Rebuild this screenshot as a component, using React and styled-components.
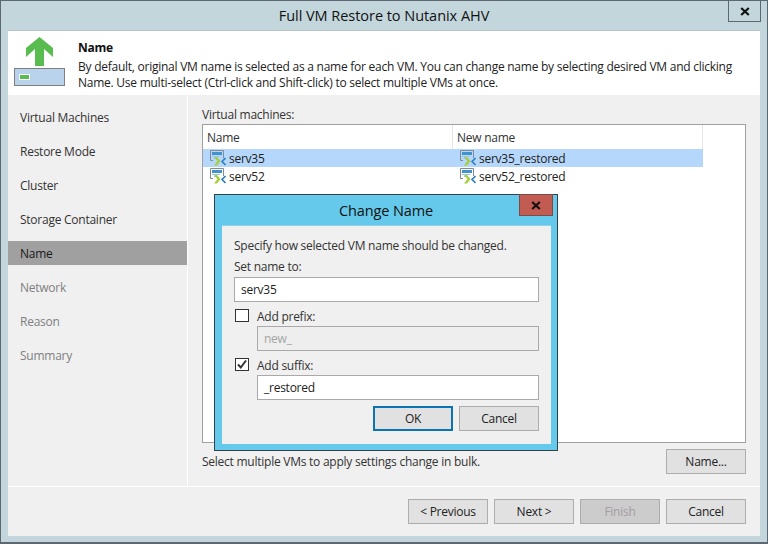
import React from 'react';
import styled, { createGlobalStyle } from 'styled-components';

const Global = createGlobalStyle`
  html, body { margin: 0; padding: 0; background: #c3d6dc; }
  body { font-family: "Open Sans", "Noto Sans", "Liberation Sans", sans-serif; font-size: 12px; letter-spacing: -0.25px; color: #1a1a1a; }
  * { box-sizing: border-box; }
`;
const Win = styled.div`
  position: relative; width: 768px; height: 544px; background: #c3d6dc;
  border: 1px solid #5d6872; border-bottom-width: 2px; display: flex; flex-direction: column; overflow: hidden;
`;
const TitleBar = styled.div`
  height: 29px; flex: none; position: relative; display: flex; align-items: center; justify-content: center;
  font-size: 14.5px; letter-spacing: -0.04px; color: #111;
`;
const CloseBtn = styled.div`
  position: absolute; top: -1px; right: ${p => p.$right}px; width: ${p => p.$w}px; height: ${p => p.$h}px;
  display: flex; align-items: center; justify-content: center;
  background: ${p => p.$bg}; border: 1px solid ${p => p.$line};
`;
const Frame = styled.div`
  flex: none; width: 752px; height: 506px; margin-left: 7px; display: flex; flex-direction: column; background: #f0f0f0;
  border-top: 1px solid #b5c5cb;
`;
const Header = styled.div`
  height: 64px; flex: none; background: #fff; display: flex;
`;
const HeaderIcon = styled.svg`
  width: 70px; height: 64px; flex: none;
`;
const HeaderText = styled.div`
  padding-top: 9px; flex: 1;
`;
const HeaderTitle = styled.div`
  font-weight: 700; line-height: 16px; margin-bottom: 3px; color: #111;
`;
const HeaderDesc = styled.div`
  line-height: 16px; width: 672px; color: #222;
`;
const Body = styled.div`
  flex: 1; display: flex; min-height: 0;
`;
const Side = styled.div`
  width: 180px; flex: none; padding-top: 10px; border-right: 1px solid #fff; display: flex; flex-direction: column; gap: 10px;
`;
const SideItem = styled.div`
  height: 24px; line-height: 24px; padding: 1px 0 0 12px;
  background: ${p => p.$active ? '#a0a0a0' : 'transparent'};
  color: ${p => p.$off ? '#808080' : p.$active ? '#1a1a1a' : '#333'};
`;
const Main = styled.div`
  flex: 1; padding: 12px 14px 12px; display: flex; flex-direction: column;
`;
const FieldLabel = styled.div`
  line-height: 16px; margin-bottom: 1px; color: #333;
`;
const TableBox = styled.div`
  flex: 1; background: #fff; border: 1px solid #a0a0a0;
`;
const HeadRow = styled.div`
  display: flex; width: 500px; height: 24px; align-items: center;
`;
const HeadCell = styled.div`
  width: ${p => p.$w}px; height: 100%; line-height: 24px; padding: 1px 0 0 4px; color: #333;
  border-right: 1px solid #e5e5e5;
`;
const Row = styled.div`
  display: flex; width: 500px; height: 18px; align-items: center;
  background: ${p => p.$sel ? '#b5d7fb' : '#fff'};
`;
const Cell = styled.div`
  width: ${p => p.$w}px; display: flex; align-items: center; gap: 3px; padding-left: ${p => p.$pad}px; color: #222;
`;
const BottomRow = styled.div`
  margin-top: 6px; display: flex; align-items: center; justify-content: space-between;
`;
const Hint = styled.div`
  color: #333;
`;
const Btn = styled.div`
  width: 80px; height: 25px; display: flex; align-items: center; justify-content: center;
  background: ${p => p.$off ? '#cccccc' : '#e1e1e1'};
  border: ${p => p.$focus ? '2px solid #0a74b5' : '1px solid #adadad'};
  color: ${p => p.$off ? '#a39ca3' : '#222'};
`;
const Footer = styled.div`
  height: 50px; flex: none; border-top: 1px solid #fff; padding: 12px 14px 0 0;
  display: flex; justify-content: flex-end; gap: 6px;
`;
const Dialog = styled.div`
  position: absolute; left: 213px; top: 193px; width: 344px; height: 257px;
  background: #64c9ea; border: 1px solid #33424b; padding: 30px 6px 6px 7px; display: flex;
`;
const DialogTitle = styled.div`
  position: absolute; left: 0; right: 0; top: 0; height: 30px; display: flex; align-items: center; justify-content: center;
  font-size: 14.5px; letter-spacing: -0.1px; color: #111;
`;
const DialogBody = styled.div`
  flex: 1; background: #f0f0f0; padding: 12px 12px 0 12px; display: flex; flex-direction: column; border-top: 1px solid #8fd2e8;
`;
const DText = styled.div`
  line-height: 16px; color: #333; margin-bottom: ${p => p.$mb ?? 0}px;
`;
const Input = styled.div`
  height: 25px; flex: none; margin-left: ${p => p.$ml ?? 0}px; display: flex; align-items: center; padding-left: 6px;
  background: ${p => p.$off ? '#eeeeee' : '#fff'}; border: 1px solid #a9a9a9; color: ${p => p.$off ? '#a5a5a5' : '#222'};
`;
const CheckRow = styled.div`
  display: flex; align-items: center; gap: 8px; height: 13px; flex: none; margin: 7px 0 4px 1px; color: #333;
`;
const CheckLabel = styled.span`
  padding-top: 2px;
`;
const CheckBox = styled.div`
  width: 14px; height: 13px; border: 1px solid #333; background: #fff; display: flex; align-items: center; justify-content: center;
`;
const DialogActions = styled.div`
  margin-top: 6px; display: flex; justify-content: flex-end; gap: 6px;
`;

const X = () => (
  <svg width="10" height="9" viewBox="0 0 10 9"><path d="M1.2 1 L8.8 8 M8.8 1 L1.2 8" stroke="#111" strokeWidth="2.2" /></svg>
);
const VmIcon = () => (
  <svg width="16" height="16" viewBox="0 0 16 16" style={{ flex: 'none' }}>
    <path d="M0.5 0.5H13.5V8M0.5 0.5V10.5H3" fill="none" stroke="#7f8c95" />
    <rect x="2" y="2" width="10" height="3" fill="#3f93cf" />
    <path d="M2 6.5H10M4 8.5H8" stroke="#9ec6e2" />
    <path d="M4 7 H7 L10.5 11 L7 15.5 H4 L7.5 11 Z" fill="#a6cf38" />
    <path d="M15.5 8 L12 11.5 L15.5 15" fill="none" stroke="#2a7fc0" strokeWidth="1.6" />
  </svg>
);

const steps = [['Virtual Machines'], ['Restore Mode'], ['Cluster'], ['Storage Container'], ['Name', 'a'], ['Network', 'o'], ['Reason', 'o'], ['Summary', 'o']];
const rows = [['serv35', 'serv35_restored', true], ['serv52', 'serv52_restored', false]];

export default function App() {
  return (
    <Win>
      <Global />
      <TitleBar>
        Full VM Restore to Nutanix AHV
        <CloseBtn $right={6} $w={33} $h={22} $bg="transparent" $line="#5d6872"><X /></CloseBtn>
      </TitleBar>
      <Frame>
        <Header>
          <HeaderIcon viewBox="0 0 70 64">
            <path d="M31.5 6 L45 17 V26 L36 18 V35 H27 V18 L18 26 V17 Z" fill="#58bc4e" />
            <rect x="6.5" y="37.5" width="50" height="17" fill="#b9d3ec" stroke="#7f7f7f" />
            <rect x="11.5" y="43.5" width="10" height="5" fill="#58bc4e" stroke="#fff" />
          </HeaderIcon>
          <HeaderText>
            <HeaderTitle>Name</HeaderTitle>
            <HeaderDesc>By default, original VM name is selected as a name for each VM. You can change name by selecting desired VM and clicking Name. Use multi-select (Ctrl-click and Shift-click) to select multiple VMs at once.</HeaderDesc>
          </HeaderText>
        </Header>
        <Body>
          <Side>
            {steps.map(([t, k]) => <SideItem key={t} $active={k === 'a'} $off={k === 'o'}>{t}</SideItem>)}
          </Side>
          <Main>
            <FieldLabel>Virtual machines:</FieldLabel>
            <TableBox>
              <HeadRow>
                <HeadCell $w={250}>Name</HeadCell>
                <HeadCell $w={250}>New name</HeadCell>
              </HeadRow>
              {rows.map(([a, b, s]) => (
                <Row key={a} $sel={s}>
                  <Cell $w={250} $pad={7}><VmIcon />{a}</Cell>
                  <Cell $w={250} $pad={7}><VmIcon />{b}</Cell>
                </Row>
              ))}
            </TableBox>
            <BottomRow>
              <Hint>Select multiple VMs to apply settings change in bulk.</Hint>
              <Btn>Name...</Btn>
            </BottomRow>
          </Main>
        </Body>
        <Footer>
          <Btn>&lt; Previous</Btn>
          <Btn>Next &gt;</Btn>
          <Btn $off>Finish</Btn>
          <Btn>Cancel</Btn>
        </Footer>
      </Frame>
      <Dialog>
        <DialogTitle>Change Name</DialogTitle>
        <CloseBtn $right={4} $w={34} $h={22} $bg="#c25b52" $line="#7d4a44"><X /></CloseBtn>
        <DialogBody>
          <DText $mb={5}>Specify how selected VM name should be changed.</DText>
          <DText $mb={2}>Set name to:</DText>
          <Input>serv35</Input>
          <CheckRow><CheckBox /><CheckLabel>Add prefix:</CheckLabel></CheckRow>
          <Input $ml={23} $off>new_</Input>
          <CheckRow>
            <CheckBox>
              <svg width="12" height="11" viewBox="0 0 12 11"><path d="M2 5.5 L4.8 8.5 L10 1.5" fill="none" stroke="#333" strokeWidth="2" /></svg>
            </CheckBox>
            <CheckLabel>Add suffix:</CheckLabel>
          </CheckRow>
          <Input $ml={23}>_restored</Input>
          <DialogActions>
            <Btn $focus>OK</Btn>
            <Btn>Cancel</Btn>
          </DialogActions>
        </DialogBody>
      </Dialog>
    </Win>
  );
}
